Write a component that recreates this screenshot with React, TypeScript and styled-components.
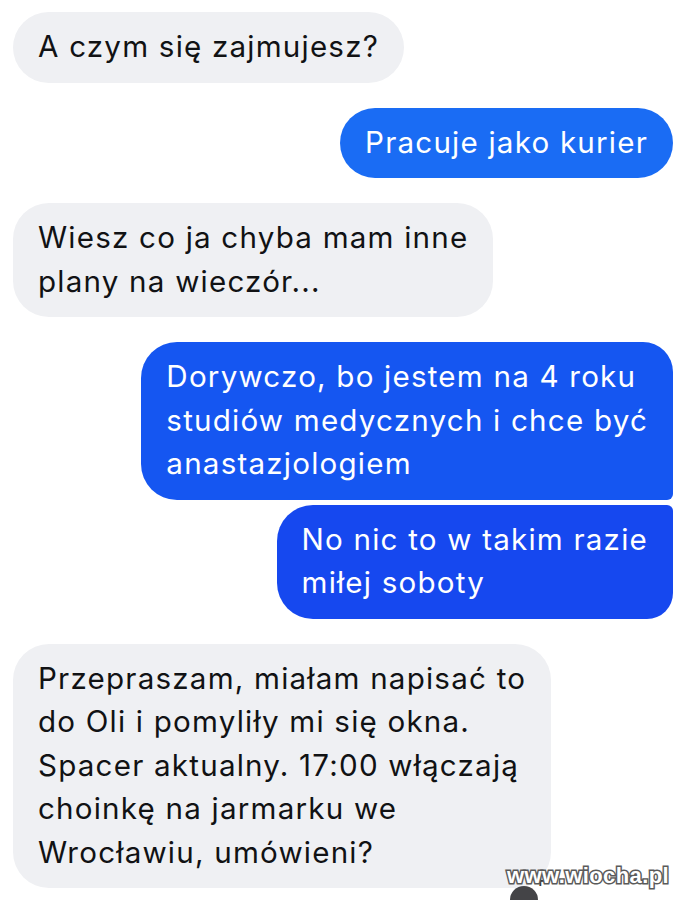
import React from "react";
import styled, { createGlobalStyle, css } from "styled-components";

const GlobalStyle = createGlobalStyle`
  html, body {
    margin: 0;
    padding: 0;
    background: #ffffff;
  }
  body {
    font-family: Inter, "Liberation Sans", Arial, sans-serif;
    -webkit-font-smoothing: antialiased;
  }
`;

type Side = "in" | "out";
type Shape = "single" | "first" | "last";

const Page = styled.div`
  position: relative;
  width: 690px;
  height: 900px;
  overflow: hidden;
  background: #ffffff;
`;

const Thread = styled.div`
  display: flex;
  flex-direction: column;
  padding: 12px 17px 0 13px;
`;

const Row = styled.div<{ $side: Side; $tight?: boolean }>`
  display: flex;
  justify-content: ${(p) => (p.$side === "out" ? "flex-end" : "flex-start")};
  margin-top: ${(p) => (p.$tight ? "5px" : "25px")};
  &:first-child {
    margin-top: 0;
  }
`;

const Bubble = styled.div<{ $side: Side; $shape: Shape; $tone?: string }>`
  white-space: pre-line;
  font-size: 29.6px;
  line-height: 43.5px;
  letter-spacing: 1.2px;
  padding: 13px 25px 14px 25px;
  border-radius: 36px;
  ${(p) =>
    p.$side === "in"
      ? css`
          background: #eff0f3;
          color: #111214;
        `
      : css`
          background: ${p.$tone};
          color: #ffffff;
        `}
  ${(p) =>
    p.$shape === "first" &&
    css`
      border-top-right-radius: 30px;
      border-bottom-right-radius: 6px;
    `}
  ${(p) =>
    p.$shape === "last" &&
    css`
      border-top-right-radius: 6px;
      border-bottom-right-radius: 26px;
    `}
`;

const Watermark = styled.div`
  position: absolute;
  left: 507px;
  top: 863px;
  font-family: "Liberation Sans", Arial, sans-serif;
  font-weight: bold;
  font-size: 22px;
  letter-spacing: 0.4px;
  color: #ffffff;
  -webkit-text-stroke: 3px #5a5a5a;
  paint-order: stroke fill;
`;

const Avatar = styled.div`
  position: absolute;
  left: 510px;
  top: 886px;
  width: 28px;
  height: 28px;
  border-radius: 50%;
  background: #444447;
  &::after {
    content: "+";
    position: absolute;
    left: 24px;
    top: -14px;
    font-family: "DejaVu Sans", sans-serif;
    font-weight: bold;
    font-size: 15px;
    color: #3a3a3a;
  }
`;

const messages: { side: Side; shape: Shape; text: string; tone?: string; tight?: boolean }[] = [
  { side: "in", shape: "single", text: "A czym się zajmujesz?" },
  { side: "out", shape: "single", text: "Pracuje jako kurier", tone: "#1a6cf4" },
  { side: "in", shape: "single", text: "Wiesz co ja chyba mam inne\nplany na wieczór..." },
  {
    side: "out",
    shape: "first",
    text: "Dorywczo, bo jestem na 4 roku\nstudiów medycznych i chce być\nanastazjologiem",
    tone: "#1556f1",
  },
  {
    side: "out",
    shape: "last",
    text: "No nic to w takim razie\nmiłej soboty",
    tone: "#1648ef",
    tight: true,
  },
  {
    side: "in",
    shape: "single",
    text: "Przepraszam, miałam napisać to\ndo Oli i pomyliły mi się okna.\nSpacer aktualny. 17:00 włączają\nchoinkę na jarmarku we\nWrocławiu, umówieni?",
  },
];

export default function App() {
  return (
    <Page>
      <GlobalStyle />
      <Thread>
        {messages.map((m, i) => (
          <Row key={i} $side={m.side} $tight={m.tight}>
            <Bubble $side={m.side} $shape={m.shape} $tone={m.tone}>
              {m.text}
            </Bubble>
          </Row>
        ))}
      </Thread>
      <Avatar />
      <Watermark>www.wiocha.pl</Watermark>
    </Page>
  );
}
